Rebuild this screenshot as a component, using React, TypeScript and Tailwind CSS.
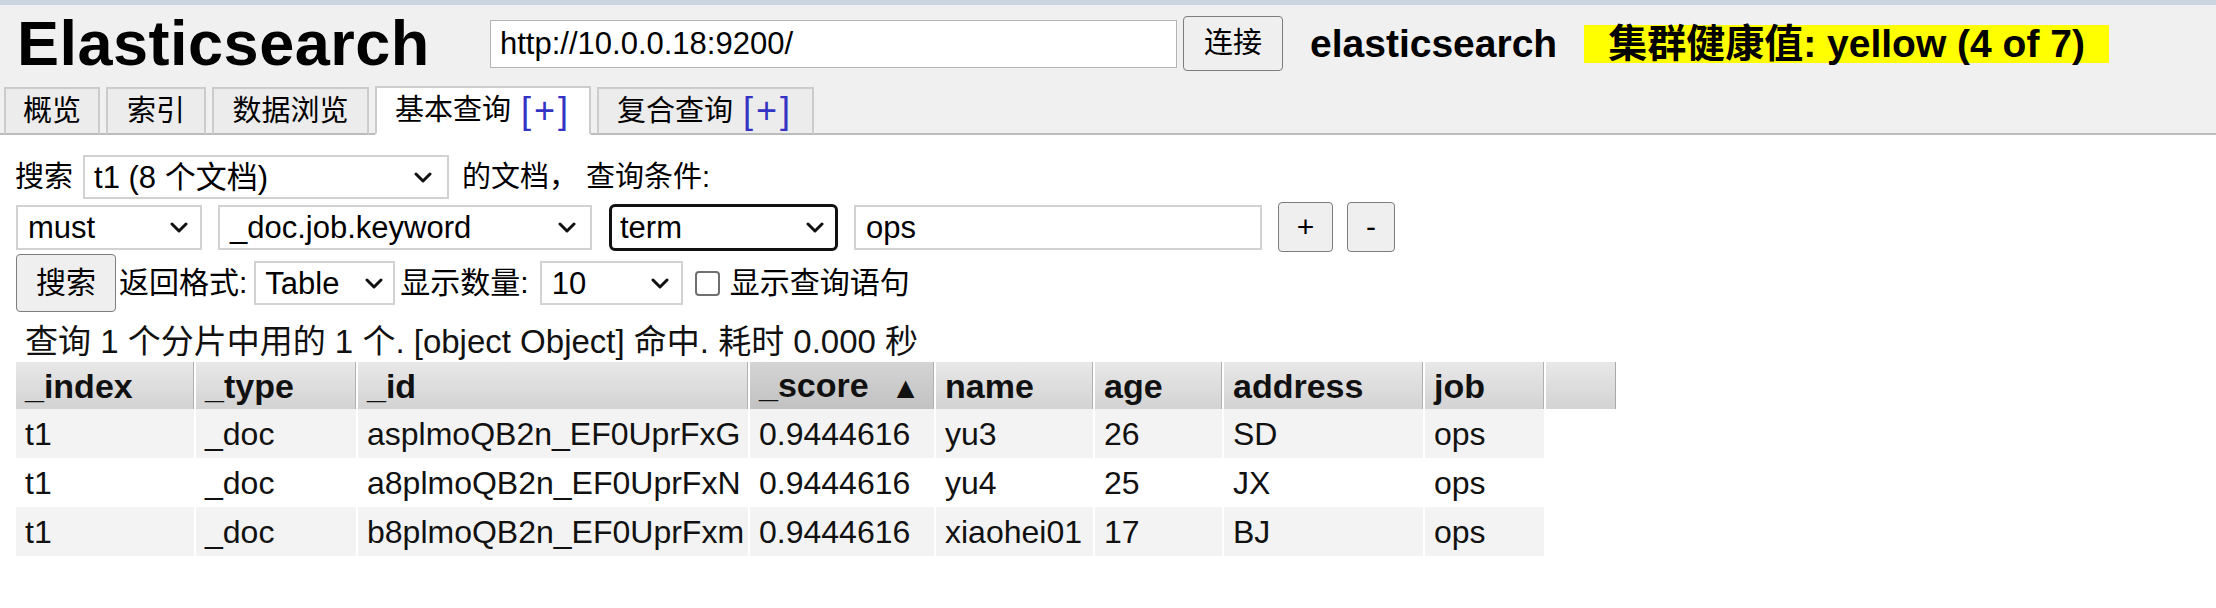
function Chevron() {
  return (
    <svg width="18" height="11" viewBox="0 0 18 11" className="shrink-0">
      <path d="M2 2 L9 9 L16 2" stroke="#111" strokeWidth="3" fill="none" strokeLinecap="round" strokeLinejoin="round" />
    </svg>
  );
}

function Select({ text, className }: { text: string; className: string }) {
  return (
    <div className={"flex items-center justify-between bg-white text-[31px] leading-none text-black " + className}>
      <span className="whitespace-nowrap">{text}</span>
      <Chevron />
    </div>
  );
}

const cols = [
  { name: "_index", w: "w-[178px]" },
  { name: "_type", w: "w-[160px]" },
  { name: "_id", w: "w-[390px]" },
  { name: "_score", w: "w-[184px]" },
  { name: "name", w: "w-[157px]" },
  { name: "age", w: "w-[127px]" },
  { name: "address", w: "w-[199px]" },
  { name: "job", w: "w-[119px]" },
];

const rows = [
  ["t1", "_doc", "asplmoQB2n_EF0UprFxG", "0.9444616", "yu3", "26", "SD", "ops"],
  ["t1", "_doc", "a8plmoQB2n_EF0UprFxN", "0.9444616", "yu4", "25", "JX", "ops"],
  ["t1", "_doc", "b8plmoQB2n_EF0UprFxm", "0.9444616", "xiaohei01", "17", "BJ", "ops"],
];

export default function App() {
  return (
    <div className="w-[2216px] h-[608px] overflow-hidden bg-white text-black font-['Liberation_Sans','Noto_Sans_CJK_SC',sans-serif]">
      {/* window edge */}
      <div className="h-[5px] bg-[#cbd5e1]" />

      {/* header */}
      <div className="bg-[#f0f0f0]">
        <div className="flex items-center h-[77px] pl-[17px]">
          <h1 className="w-[473px] text-[63px] font-bold leading-none tracking-[0.5px]">Elasticsearch</h1>
          <div className="flex items-center w-[687px] h-[48px] bg-white border border-[#b4b4b4] pl-[9px] text-[31px] leading-none">
            http://10.0.0.18:9200/
          </div>
          <button className="ml-[6px] w-[100px] h-[55px] bg-[#efefef] border border-[#7d7d7d] rounded-[4px] text-[29px] leading-none">
            连接
          </button>
          <span className="ml-[27px] text-[39px] font-bold leading-none">elasticsearch</span>
          <span className="ml-[27px] flex items-center h-[38px] px-[24px] bg-[#ffff00] text-[39px] font-bold leading-none">
            集群健康值: yellow (4 of 7)
          </span>
        </div>

        {/* tabs */}
        <div className="flex items-end gap-[6px] pl-[4px] mt-[4px] border-b-2 border-[#bcbcbc]">
          <div className="-mb-[2px] flex items-center justify-center w-[96px] h-[48px] bg-[#ececec] border-2 border-[#cccccc] border-b-[#bcbcbc] text-[29px] leading-none">概览</div>
          <div className="-mb-[2px] flex items-center justify-center w-[100px] h-[48px] bg-[#ececec] border-2 border-[#cccccc] border-b-[#bcbcbc] text-[29px] leading-none">索引</div>
          <div className="-mb-[2px] flex items-center justify-center w-[157px] h-[48px] bg-[#ececec] border-2 border-[#cccccc] border-b-[#bcbcbc] text-[29px] leading-none">数据浏览</div>
          <div className="-mb-[2px] flex items-center pl-[18px] w-[216px] h-[49px] bg-white border-2 border-[#cccccc] border-b-white text-[29px] leading-none">
            基本查询<span className="ml-[10px] text-[#3434c4] text-[36px] font-light tracking-[3px]">[+]</span>
          </div>
          <div className="-mb-[2px] flex items-center pl-[18px] w-[217px] h-[48px] bg-[#ececec] border-2 border-[#cccccc] border-b-[#bcbcbc] text-[29px] leading-none">
            复合查询<span className="ml-[10px] text-[#3434c4] text-[36px] font-light tracking-[3px]">[+]</span>
          </div>
        </div>
      </div>

      {/* query form */}
      <div className="flex items-center h-[44px] mt-[20px] pl-[15px] text-[29px] leading-none">
        <span>搜索</span>
        <Select text="t1 (8 个文档)" className="ml-[10px] w-[366px] h-[44px] pl-[9px] pr-[15px] border-2 border-[#d2d2d2]" />
        <span className="ml-[13px]">的文档， 查询条件:</span>
      </div>

      <div className="flex items-center h-[52px] mt-[2px] pl-[16px]">
        <Select text="must" className="w-[186px] h-[45px] pl-[10px] pr-[12px] border-2 border-[#d2d2d2]" />
        <Select text="_doc.job.keyword" className="ml-[16px] w-[374px] h-[45px] pl-[10px] pr-[14px] border-2 border-[#d2d2d2]" />
        <Select text="term" className="ml-[17px] w-[229px] h-[47px] pl-[8px] pr-[11px] border-[3px] border-[#111] rounded-[6px]" />
        <div className="ml-[16px] flex items-center w-[408px] h-[45px] pl-[10px] bg-white border-2 border-[#d2d2d2] text-[31px] leading-none">ops</div>
        <button className="ml-[16px] w-[55px] h-[50px] bg-[#efefef] border border-[#7d7d7d] rounded-[4px] text-[30px] leading-none">+</button>
        <button className="ml-[14px] w-[48px] h-[50px] bg-[#efefef] border border-[#7d7d7d] rounded-[4px] text-[30px] leading-none">-</button>
      </div>

      <div className="flex items-center h-[58px] mt-[1px] pl-[16px] text-[30px] leading-none">
        <button className="w-[100px] h-[58px] bg-[#efefef] border border-[#7d7d7d] rounded-[4px] text-[30px] leading-none">搜索</button>
        <span className="ml-[3px]">返回格式:</span>
        <Select text="Table" className="ml-[7px] w-[141px] h-[44px] pl-[9px] pr-[10px] border-2 border-[#d2d2d2]" />
        <span className="ml-[5px]">显示数量:</span>
        <Select text="10" className="ml-[11px] w-[143px] h-[44px] pl-[10px] pr-[12px] border-2 border-[#d2d2d2]" />
        <span className="ml-[12px] w-[25px] h-[25px] bg-white border-2 border-[#6f6f6f] rounded-[4px]" />
        <span className="ml-[10px]">显示查询语句</span>
      </div>

      {/* results */}
      <div className="mt-[9px] pl-[25px] h-[41px] flex items-center text-[33px] leading-none text-[#111]">
        查询 1 个分片中用的 1 个. [object Object] 命中. 耗时 0.000 秒
      </div>

      <table className="ml-[14px] table-fixed border-separate border-spacing-x-[2px] border-spacing-y-0 text-[32px] leading-none text-[#111]">
        <thead>
          <tr>
            {cols.map((c) => (
              <th
                key={c.name}
                className={
                  c.w +
                  " h-[47px] pl-[9px] text-left font-bold text-[34px] border-r border-[#b0b0b0] bg-linear-to-b " +
                  (c.name === "_score" ? "from-[#d4d4d4] to-[#c2c2c2]" : "from-[#e8e8e8] to-[#d3d3d3]")
                }
              >
                {c.name}
                {c.name === "_score" && <span className="ml-[22px] text-[30px] align-middle">▲</span>}
              </th>
            ))}
            <th className="w-[70px] h-[47px] border-r border-[#a8a8a8] bg-linear-to-b from-[#e8e8e8] to-[#d3d3d3]" />
          </tr>
        </thead>
        <tbody>
          {rows.map((r, i) => (
            <tr key={i}>
              {r.map((v, j) => (
                <td key={j} className={"h-[49px] pl-[9px] whitespace-nowrap " + (i === 1 ? "bg-white" : "bg-[#f3f3f3]")}>
                  {v}
                </td>
              ))}
              <td />
            </tr>
          ))}
        </tbody>
      </table>
    </div>
  );
}
